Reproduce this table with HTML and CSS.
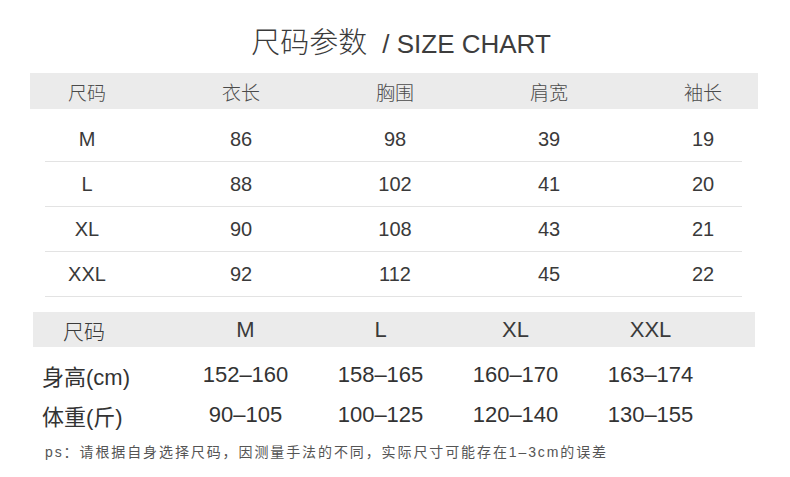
FILE: index.html
```html
<!DOCTYPE html>
<html lang="zh">
<head>
<meta charset="utf-8">
<title>尺码参数 / SIZE CHART</title>
<link rel="stylesheet" href="styles.css">
</head>
<body>
<div class="page">
  <h1 class="title"><span class="title-cn">尺码参数</span><span class="title-en">/ SIZE CHART</span></h1>

  <div class="chart">
    <div class="row band">
      <div class="c1">尺码</div><div>衣长</div><div>胸围</div><div>肩宽</div><div class="c5">袖长</div>
    </div>
    <div class="row data first">
      <div class="c1">M</div><div>86</div><div>98</div><div>39</div><div class="c5">19</div>
    </div>
    <div class="row data">
      <div class="c1">L</div><div>88</div><div>102</div><div>41</div><div class="c5">20</div>
    </div>
    <div class="row data">
      <div class="c1">XL</div><div>90</div><div>108</div><div>43</div><div class="c5">21</div>
    </div>
    <div class="row data">
      <div class="c1">XXL</div><div>92</div><div>112</div><div>45</div><div class="c5">22</div>
    </div>
  </div>

  <div class="ref">
    <div class="ref-row ref-band">
      <div class="lab head">尺码</div><div>M</div><div>L</div><div>XL</div><div>XXL</div>
    </div>
    <div class="ref-row ref-data first">
      <div class="lab">身高(cm)</div><div>152–160</div><div>158–165</div><div>160–170</div><div>163–174</div>
    </div>
    <div class="ref-row ref-data">
      <div class="lab">体重(斤)</div><div>90–105</div><div>100–125</div><div>120–140</div><div>130–155</div>
    </div>
  </div>

  <p class="note">ps：请根据自身选择尺码，因测量手法的不同，实际尺寸可能存在1–3cm的误差</p>
</div>
</body>
</html>
```

FILE: styles.css
```css
html, body {
  margin: 0;
  padding: 0;
  background: #ffffff;
}

body {
  font-family: "Liberation Sans", "Noto Sans CJK SC", sans-serif;
  color: #3a3a3a;
}

.page {
  width: 790px;
  height: 477px;
  overflow: hidden;
}

.title {
  margin: 20px 0 0 0;
  padding-left: 12px;
  height: 40px;
  line-height: 40px;
  text-align: center;
  font-weight: 300;
  color: #3a3a3a;
  white-space: nowrap;
}

.title-cn {
  font-family: "Noto Sans CJK SC", sans-serif;
  font-size: 29px;
  font-weight: 300;
}

.title-en {
  font-family: "Liberation Sans", sans-serif;
  font-size: 26px;
  font-weight: 400;
  margin-left: 15px;
  color: #3d3d3d;
}

/* ---------- size chart ---------- */
.chart {
  margin: 13px 0 0 30px;
  width: 728px;
}

.row {
  display: grid;
  grid-template-columns: 134px 154px 154px 154px 132px;
  align-items: center;
  font-size: 20px;
  text-align: center;
}

.row .c1 {
  padding-right: 20px;
}

.row .c5 {
  padding-left: 22px;
}

.band {
  height: 36px;
  background: #ebebeb;
  font-family: "Noto Sans CJK SC", sans-serif;
  font-weight: 300;
  font-size: 19px;
  color: #4a4a4a;
}

.data {
  height: 45px;
  color: #3a3a3a;
  background: linear-gradient(#e3e3e3, #e3e3e3) no-repeat 15px 100% / 697px 1px;
}

.data.first {
  margin-top: 8px;
}

/* ---------- reference chart ---------- */
.ref {
  margin: 15px 0 0 33px;
  width: 722px;
}

.ref-row {
  display: grid;
  grid-template-columns: 145px 135px 135px 135px 135px 37px;
  align-items: center;
  font-size: 22px;
  text-align: center;
  color: #333333;
}

.ref-row .lab {
  text-align: left;
  padding-left: 9px;
  font-size: 22px;
}

.ref-row .lab.head {
  padding-left: 30px;
  font-size: 21px;
}

.ref-band {
  height: 35px;
  background: #ebebeb;
  color: #3a3a3a;
}

.ref-band .head {
  font-family: "Noto Sans CJK SC", sans-serif;
  font-weight: 300;
}

.ref-data {
  height: 40px;
}

.ref-data.first {
  margin-top: 8px;
}

/* ---------- note ---------- */
.note {
  margin: 7px 0 0 45px;
  line-height: 20px;
  font-size: 14px;
  letter-spacing: 1.9px;
  color: #555555;
  white-space: nowrap;
}
```
